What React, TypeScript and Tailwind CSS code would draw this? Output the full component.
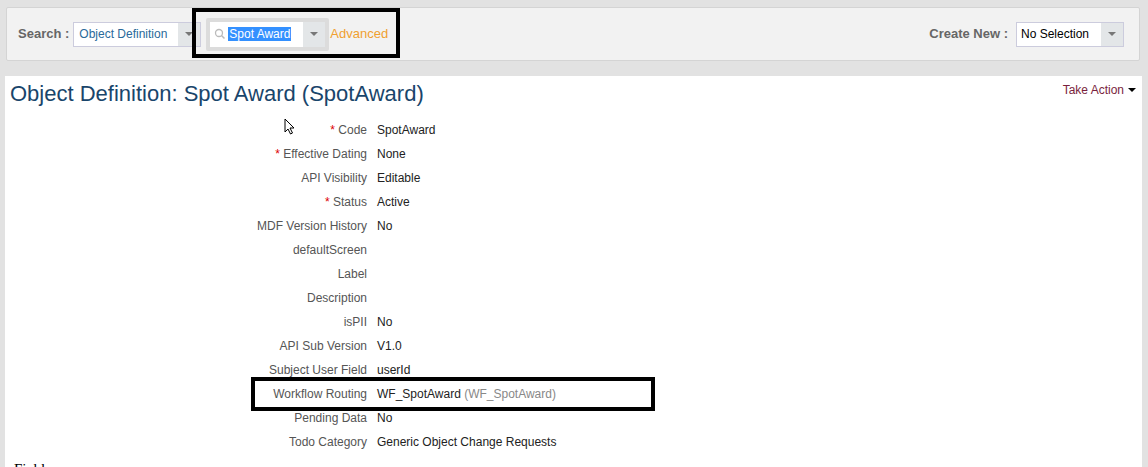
const rows: [string, boolean, string, string?][] = [
  ["Code", true, "SpotAward"],
  ["Effective Dating", true, "None"],
  ["API Visibility", false, "Editable"],
  ["Status", true, "Active"],
  ["MDF Version History", false, "No"],
  ["defaultScreen", false, ""],
  ["Label", false, ""],
  ["Description", false, ""],
  ["isPII", false, "No"],
  ["API Sub Version", false, "V1.0"],
  ["Subject User Field", false, "userId"],
  ["Workflow Routing", false, "WF_SpotAward", "(WF_SpotAward)"],
  ["Pending Data", false, "No"],
  ["Todo Category", false, "Generic Object Change Requests"],
];

function Caret() {
  return <div className="w-[22px] self-stretch bg-[#e3e6e8] flex items-center justify-center"><div className="w-0 h-0 border-x-[4px] border-x-transparent border-t-[4px] border-t-[#777]" /></div>;
}

export default function App() {
  return (
    <div className="w-[1148px] h-[467px] bg-[#e2e2e2] overflow-hidden relative text-[12px]" style={{ fontFamily: '"Liberation Sans", Arial, sans-serif' }}>
      <div className="pt-[7px] px-[6px] pr-[8px]">
        <div className="h-[54px] bg-[#f2f2f2] border border-[#d4d4d4] rounded-[2px] flex items-center pl-[11px] pr-[15px]">
          <span className="font-bold text-[#666] text-[13px] mr-[4px]">Search :</span>
          <div className="w-[128px] h-[25px] bg-white border border-[#ccd] flex items-center">
            <span className="flex-1 pl-[5px] text-[#2a6a9a]">Object Definition</span><Caret />
          </div>
          <div className="ml-[5px] bg-[#dcdcdc] p-[4px] rounded-[2px]">
            <div className="w-[115px] h-[25px] bg-white flex items-center">
              <svg width="12" height="12" viewBox="0 0 12 12" className="ml-[4px]"><circle cx="5" cy="5" r="3.5" fill="none" stroke="#bbb" strokeWidth="1.3"/><path d="M7.5 7.5 L10.5 10.5" stroke="#bbb" strokeWidth="1.5"/></svg>
              <span className="ml-[2px] bg-[#3390ff] text-white px-[1px] leading-[14px]">Spot Award</span>
              <span className="flex-1" /><Caret />
            </div>
          </div>
          <span className="ml-[1px] text-[#f0a030] text-[13px]">Advanced</span>
          <span className="flex-1" />
          <span className="font-bold text-[#666] text-[13px] mr-[8px]">Create New :</span>
          <div className="w-[108px] h-[25px] bg-white border border-[#ccd] flex items-center">
            <span className="flex-1 pl-[4px] text-black">No Selection</span><Caret />
          </div>
        </div>
      </div>
      <div className="mt-[15px] ml-[5px] mr-[6px] bg-white h-[400px] relative">
        <div className="flex justify-between items-start">
          <h1 className="text-[22px] text-[#19456b] pl-[5px] pt-[4px] leading-[28px]">Object Definition: Spot Award (SpotAward)</h1>
          <span className="text-[#7a1f3d] pt-[5px] pr-[6px] flex items-center gap-[4px]">Take Action<span className="w-0 h-0 border-x-[4px] border-x-transparent border-t-[4px] border-t-black" /></span>
        </div>
        <div className="mt-[10px]">
          {rows.map(([l, req, v, extra]) => (
            <div key={l} className="flex h-[24px] items-center">
              <div className="w-[362px] text-right text-[#555]">{req && <span className="text-[#d00]">* </span>}{l}</div>
              <div className="ml-[10px] text-[#222]">{v}{extra && <span className="text-[#888]"> {extra}</span>}</div>
            </div>
          ))}
        </div>
        <div className="pl-[9px] pt-[4px] text-[15px]" style={{ fontFamily: '"Liberation Serif", serif' }}>Fields</div>
      </div>
      <div className="absolute left-[192px] top-[8px] w-[208px] h-[50px] border-[4px] border-black" />
      <div className="absolute left-[251px] top-[377px] w-[404px] h-[34px] border-[4px] border-black" />
      <svg className="absolute left-[284px] top-[118px]" width="12" height="18" viewBox="0 0 12 18"><path d="M1 1 L1 14 L4 11 L6.5 16 L8.5 15 L6 10 L10 10 Z" fill="white" stroke="black" strokeWidth="1"/></svg>
    </div>
  );
}
